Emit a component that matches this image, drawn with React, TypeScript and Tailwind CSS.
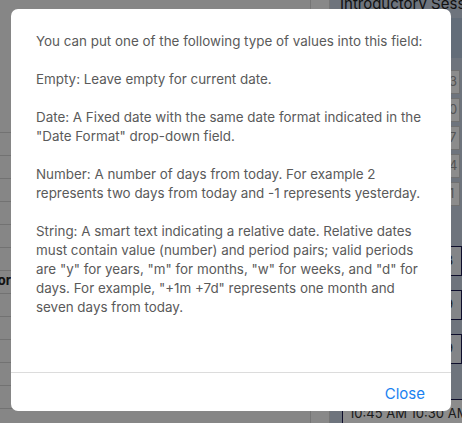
import React from 'react';

const rows = [0, 1, 2, 3, 4, 5, 6, 7, 8, 9, 10, 11, 12];

const Background = () => (
  <div className="flex h-full w-full bg-[#f4f4f4]">
    <div className="flex w-[310px] flex-col pt-[110px]">
      {rows.map(r => (
        <div key={r} className="flex h-[23px] border-b border-[#d0d0d0] text-[13px] font-bold text-[#222]">
          {r === 7 ? <div className="flex w-[11px] justify-end overflow-hidden whitespace-nowrap">Instructor</div> : null}
        </div>
      ))}
    </div>
    <div className="w-[20px] border-x border-[#d8d8d8] bg-[#fafafa]" />
    <div className="flex flex-1 flex-col overflow-hidden bg-[#c8d4e4]">
      <div className="h-[16px] whitespace-nowrap pl-[10px] text-[15px] leading-[8px] text-[#222]">Introductory Session</div>
      <div className="mt-[2px] h-[40px] bg-[#b4c6dc]" />
      <div className="flex flex-col items-end gap-[4px] pr-[2px] pt-[12px] text-[13px] text-[#999]">
        {['3', '0', '7', '4', '1'].map(n => (
          <div key={n} className="flex h-[24px] w-[14px] items-center border border-[#ccc] bg-white pl-[2px]">{n}</div>
        ))}
      </div>
      <div className="mt-[40px] flex flex-col items-end gap-[14px] text-[13px] text-[#333]">
        {['8', '9', '9'].map((n, i) => (
          <div key={i} className="flex h-[30px] w-[22px] items-center border border-[#1a1a50] bg-[#eef2f8] pl-[4px]">{n}</div>
        ))}
      </div>
      <div className="mt-auto ml-[12px] h-[24px] overflow-hidden whitespace-nowrap border-l border-t border-[#1a1a50] bg-white pl-[6px] pt-[4px] text-[13px] text-[#333]">10:45 AM 10:30 AM</div>
    </div>
  </div>
);

export default function App() {
  return (
    <div className="relative h-[423px] w-[462px] overflow-hidden" style={{ fontFamily: 'Inter, "Noto Sans", sans-serif' }}>
      <Background />
      <div className="absolute inset-0 bg-black/45" />
      <div className="absolute left-[11px] top-[9px] flex h-[402px] w-[440px] flex-col rounded-[7px] bg-white">
        <div className="flex-1 px-[25px] pt-[23px] text-[13.4px] leading-[19px] text-[#5a5a5a]">
          <p>You can put one of the following type of values into this field:</p>
          <p className="mt-[19px]">Empty: Leave empty for current date.</p>
          <p className="mt-[19px]">Date: A Fixed date with the same date format indicated in the "Date Format" drop-down field.</p>
          <p className="mt-[19px]">Number: A number of days from today. For example 2 represents two days from today and -1 represents yesterday.</p>
          <p className="mt-[19px]">String: A smart text indicating a relative date. Relative dates must contain value (number) and period pairs; valid periods are "y" for years, "m" for months, "w" for weeks, and "d" for days. For example, "+1m +7d" represents one month and seven days from today.</p>
        </div>
        <div className="flex h-[39px] items-center justify-end border-t border-[#dcdcdc] pr-[26px] pt-[4px]">
          <button className="text-[15px] text-[#1a82f0]">Close</button>
        </div>
      </div>
    </div>
  );
}
